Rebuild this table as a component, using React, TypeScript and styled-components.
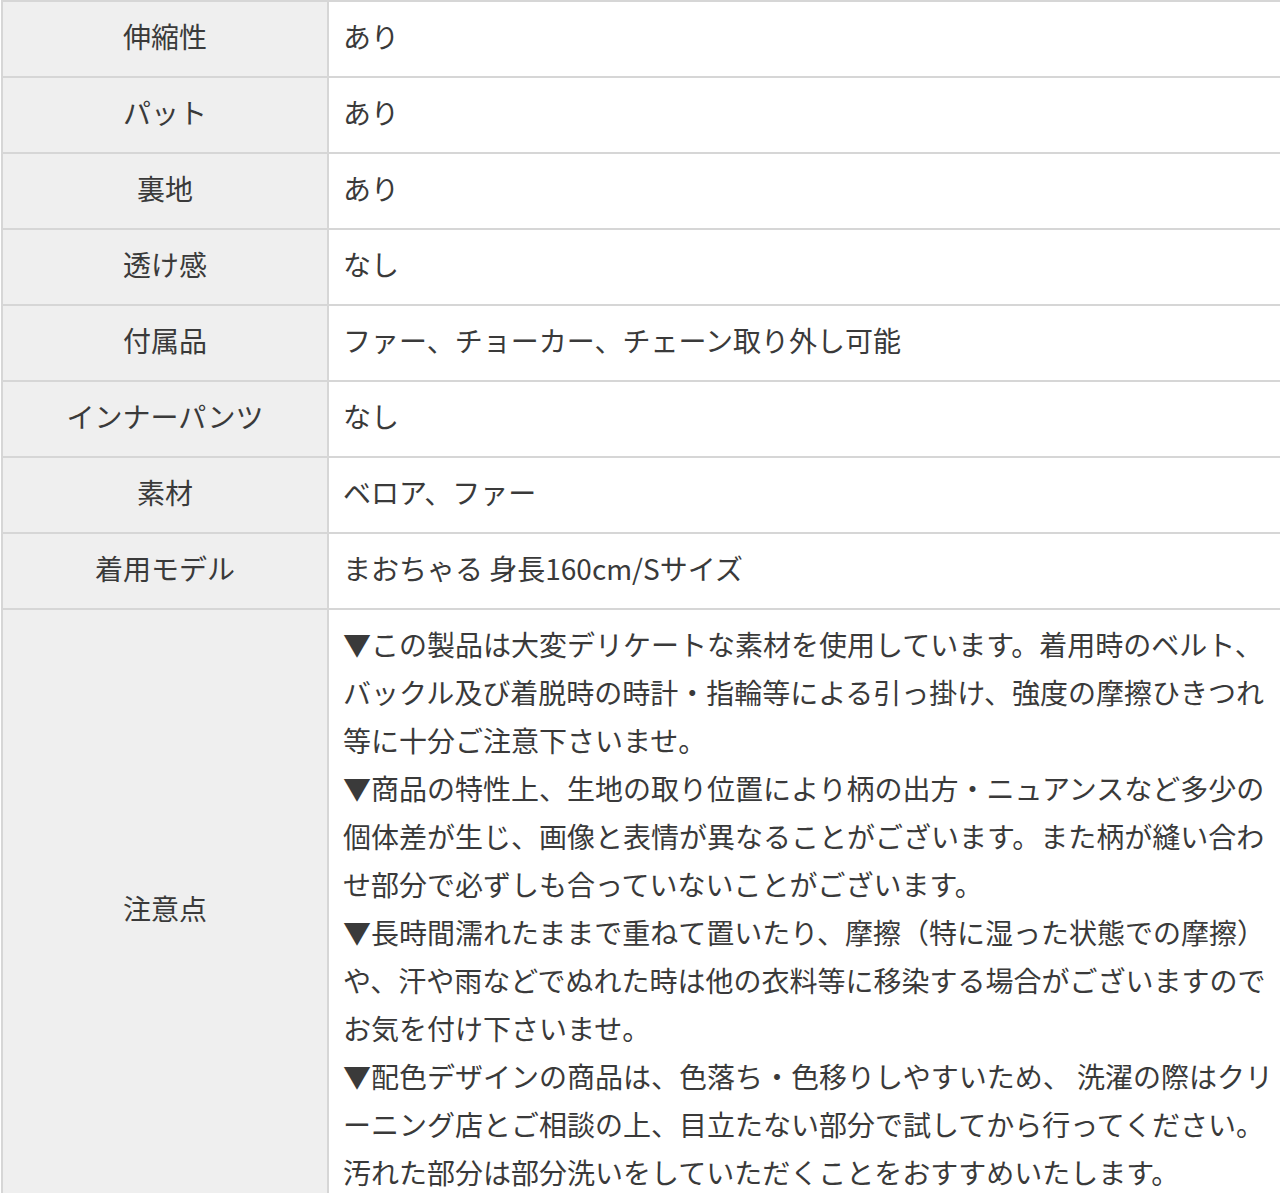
import * as React from 'react';
import styled, { createGlobalStyle } from 'styled-components';

interface Spec {
    id: string;
    label: string;
    value: React.ReactNode;
}

const GlobalStyle = createGlobalStyle`
    html, body {
        margin: 0;
        padding: 0;
        background: #fff;
        overflow: hidden;
    }
    body {
        font-family: "Noto Sans CJK JP", "Noto Sans", sans-serif;
        color: #3a3a3a;
    }
`;

const Wrapper = styled.div`
    padding: 0 0 0 1px;
`;

const Table = styled.table`
    width: 100%;
    border-collapse: collapse;
    table-layout: fixed;
    font-size: 28px;
    line-height: 48px;
`;

const Head = styled.th`
    width: 308px;
    background: #efefef;
    border: 2px solid #d6d6d6;
    font-weight: 400;
    text-align: center;
    vertical-align: middle;
    padding: 10px 8px 16px;
    color: #3a3a3a;
`;

const Cell = styled.td`
    border: 2px solid #d6d6d6;
    border-right: none;
    padding: 10px 0 16px 14px;
    text-align: left;
    vertical-align: middle;
    color: #3a3a3a;
`;

const Note = styled.p`
    margin: 0;
    padding: 0;
`;

const notes: string[] = [
    '▼この製品は大変デリケートな素材を使用しています。着用時のベルト、バックル及び着脱時の時計・指輪等による引っ掛け、強度の摩擦ひきつれ等に十分ご注意下さいませ。',
    '▼商品の特性上、生地の取り位置により柄の出方・ニュアンスなど多少の個体差が生じ、画像と表情が異なることがございます。また柄が縫い合わせ部分で必ずしも合っていないことがございます。',
    '▼長時間濡れたままで重ねて置いたり、摩擦（特に湿った状態での摩擦）や、汗や雨などでぬれた時は他の衣料等に移染する場合がございますのでお気を付け下さいませ。',
    '▼配色デザインの商品は、色落ち・色移りしやすいため、 洗濯の際はクリーニング店とご相談の上、目立たない部分で試してから行ってください。汚れた部分は部分洗いをしていただくことをおすすめいたします。',
];

const specs: Spec[] = [
    { id: 'stretch', label: '伸縮性', value: 'あり' },
    { id: 'pad', label: 'パット', value: 'あり' },
    { id: 'lining', label: '裏地', value: 'あり' },
    { id: 'sheer', label: '透け感', value: 'なし' },
    { id: 'acc', label: '付属品', value: 'ファー、チョーカー、チェーン取り外し可能' },
    { id: 'inner', label: 'インナーパンツ', value: 'なし' },
    { id: 'material', label: '素材', value: 'ベロア、ファー' },
    { id: 'model', label: '着用モデル', value: 'まおちゃる 身長160cm/Sサイズ' },
    {
        id: 'notes',
        label: '注意点',
        value: notes.map((n, i) => <Note key={i}>{n}</Note>),
    },
];

const App: React.FC = () => {
    return (
        <>
            <GlobalStyle />
            <Wrapper>
                <Table>
                    <tbody>
                        {specs.map(item => (
                            <tr key={item.id}>
                                <Head>{item.label}</Head>
                                <Cell>{item.value}</Cell>
                            </tr>
                        ))}
                    </tbody>
                </Table>
            </Wrapper>
        </>
    );
};

export default App;
